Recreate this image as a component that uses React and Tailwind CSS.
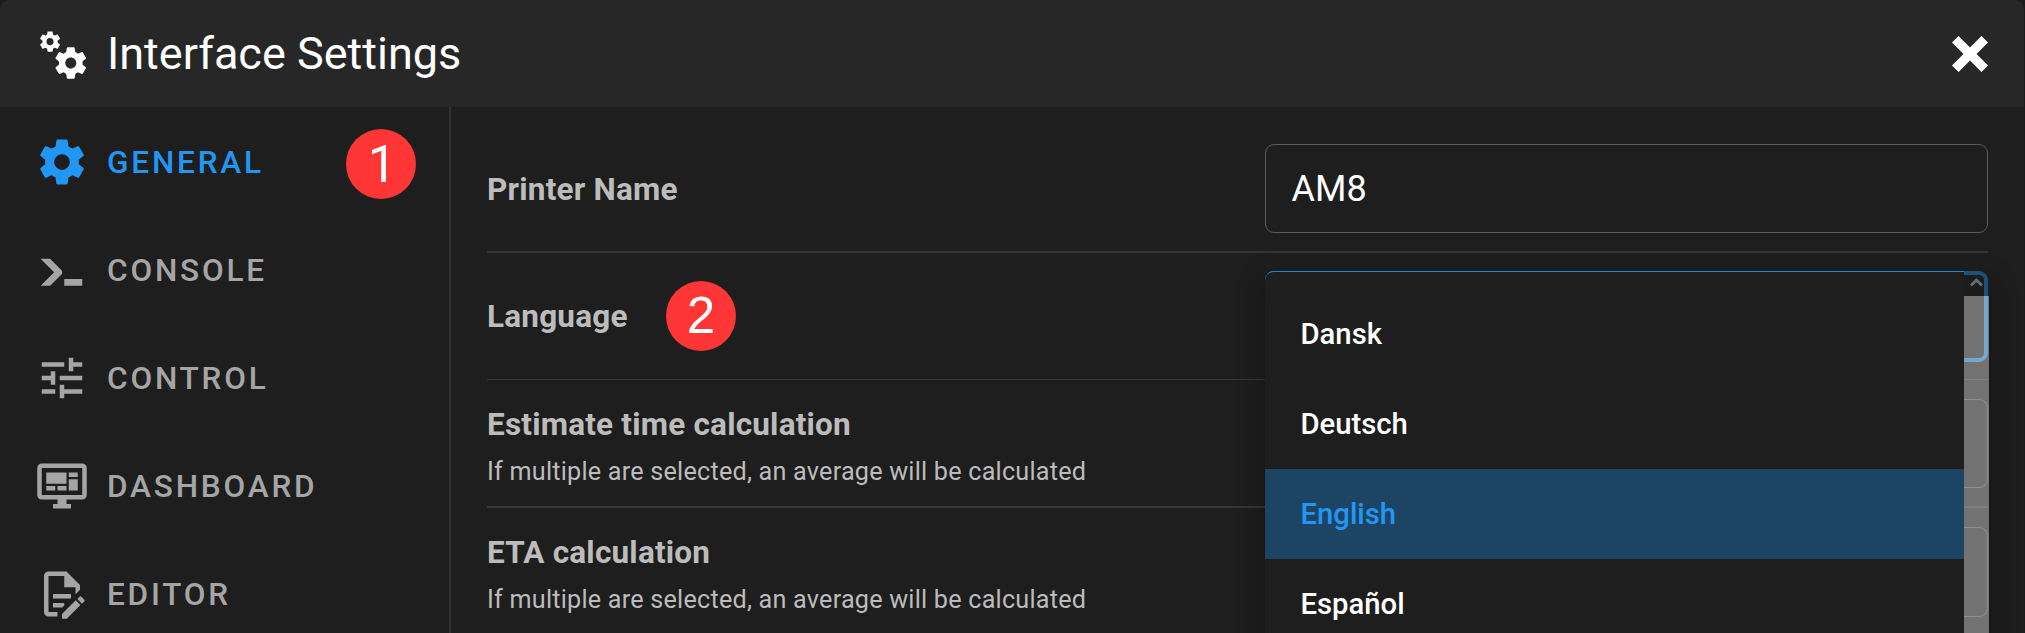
const icons = {
  cogs: "M15.9,18.45C17.25,18.45 18.35,17.35 18.35,16C18.35,14.65 17.25,13.55 15.9,13.55C14.54,13.55 13.45,14.65 13.45,16C13.45,17.35 14.54,18.45 15.9,18.45M21.1,16.68L22.58,17.84C22.71,17.95 22.75,18.13 22.66,18.29L21.26,20.71C21.17,20.86 21,20.92 20.83,20.86L19.09,20.16C18.73,20.44 18.33,20.67 17.91,20.85L17.64,22.7C17.62,22.87 17.47,23 17.3,23H14.5C14.32,23 14.18,22.87 14.15,22.7L13.89,20.85C13.46,20.67 13.07,20.44 12.71,20.16L10.96,20.86C10.81,20.92 10.62,20.86 10.54,20.71L9.14,18.29C9.05,18.13 9.09,17.95 9.22,17.84L10.7,16.68L10.65,16L10.7,15.31L9.22,14.16C9.09,14.05 9.05,13.86 9.14,13.71L10.54,11.29C10.62,11.13 10.81,11.07 10.96,11.13L12.71,11.84C13.07,11.56 13.46,11.32 13.89,11.15L14.15,9.29C14.18,9.13 14.32,9 14.5,9H17.3C17.47,9 17.62,9.13 17.64,9.29L17.91,11.15C18.33,11.32 18.73,11.56 19.09,11.84L20.83,11.13C21,11.07 21.17,11.13 21.26,11.29L22.66,13.71C22.75,13.86 22.71,14.05 22.58,14.16L21.1,15.31L21.15,16L21.1,16.68M6.69,8.07C7.56,8.07 8.26,7.37 8.26,6.5C8.26,5.63 7.56,4.92 6.69,4.92A1.58,1.58 0 0,0 5.11,6.5C5.11,7.37 5.82,8.07 6.69,8.07M10.03,6.94L11,7.68C11.07,7.75 11.09,7.87 11.03,7.97L10.13,9.53C10.08,9.63 9.96,9.67 9.86,9.63L8.74,9.18L8,9.62L7.81,10.81C7.79,10.92 7.7,11 7.59,11H5.79C5.67,11 5.58,10.92 5.56,10.81L5.4,9.62L4.64,9.18L3.52,9.63C3.41,9.67 3.3,9.63 3.24,9.53L2.34,7.97C2.28,7.87 2.31,7.75 2.39,7.68L3.34,6.94L3.31,6.5L3.34,6.06L2.39,5.32C2.31,5.25 2.28,5.13 2.34,5.03L3.24,3.47C3.3,3.37 3.41,3.33 3.52,3.37L4.63,3.82L5.4,3.38L5.56,2.19C5.58,2.08 5.67,2 5.79,2H7.59C7.7,2 7.79,2.08 7.81,2.19L8,3.38L8.74,3.82L9.86,3.37C9.96,3.33 10.08,3.37 10.13,3.47L11.03,5.03C11.09,5.13 11.07,5.25 11,5.32L10.03,6.06L10.06,6.5L10.03,6.94Z",
  cog: "M12,15.5A3.5,3.5 0 0,1 8.5,12A3.5,3.5 0 0,1 12,8.5A3.5,3.5 0 0,1 15.5,12A3.5,3.5 0 0,1 12,15.5M19.43,12.97C19.47,12.65 19.5,12.33 19.5,12C19.5,11.67 19.47,11.34 19.43,11L21.54,9.37C21.73,9.22 21.78,8.95 21.66,8.73L19.66,5.27C19.54,5.05 19.27,4.96 19.05,5.05L16.56,6.05C16.04,5.66 15.5,5.32 14.87,5.07L14.5,2.42C14.46,2.18 14.25,2 14,2H10C9.75,2 9.54,2.18 9.5,2.42L9.13,5.07C8.5,5.32 7.96,5.66 7.44,6.05L4.95,5.05C4.73,4.96 4.46,5.05 4.34,5.27L2.34,8.73C2.21,8.95 2.27,9.22 2.46,9.37L4.57,11C4.53,11.34 4.5,11.67 4.5,12C4.5,12.33 4.53,12.65 4.57,12.97L2.46,14.63C2.27,14.78 2.21,15.05 2.34,15.27L4.34,18.73C4.46,18.95 4.73,19.03 4.95,18.95L7.44,17.94C7.96,18.34 8.5,18.68 9.13,18.93L9.5,21.58C9.54,21.82 9.75,22 10,22H14C14.25,22 14.46,21.82 14.5,21.58L14.87,18.93C15.5,18.67 16.04,18.34 16.56,17.94L19.05,18.95C19.27,19.03 19.54,18.95 19.66,18.73L21.66,15.27C21.78,15.05 21.73,14.78 21.54,14.63L19.43,12.97Z",
  console: "M13,19V16H21V19H13M8.5,13L2.47,7H6.71L11.67,11.95C12.25,12.54 12.25,13.5 11.67,14.07L6.74,19H2.5L8.5,13Z",
  tune: "M3,17V19H9V17H3M3,5V7H13V5H3M13,21V19H21V17H13V15H11V21H13M7,9V11H3V13H7V15H9V9H7M21,13V11H11V13H21M15,9H17V7H21V5H17V3H15V9Z",
  dashboard: "M21,16V4H3V16H21M21,2A2,2 0 0,1 23,4V16A2,2 0 0,1 21,18H14V20H16V22H8V20H10V18H3C1.89,18 1,17.1 1,16V4C1,2.89 1.89,2 3,2H21M5,6H14V11H5V6M15,6H19V8H15V6M19,9V14H15V9H19M5,12H9V14H5V12M10,12H14V14H10V12Z",
  editor: "M8,12H16V14H8V12M10,20H6V4H13V9H18V12.1L20,10.1V8L14,2H6A2,2 0 0,0 4,4V20A2,2 0 0,0 6,22H10V20M8,18H12.1L13,17.1V16H8V18M20.2,13C20.3,13 20.5,13.1 20.6,13.2L21.9,14.5C22.1,14.7 22.1,15.1 21.9,15.3L20.9,16.3L18.8,14.2L19.8,13.2C19.9,13.1 20,13 20.2,13M20.2,16.9L14.1,23H12V20.9L18.1,14.8L20.2,16.9Z",
  close: "M20 6.91L17.09 4L12 9.09L6.91 4L4 6.91L9.09 12L4 17.09L6.91 20L12 14.91L17.09 20L20 17.09L14.91 12L20 6.91Z",
};

function Icon({ name }) {
  return (
    <svg viewBox="0 0 24 24" className="size-[54px] shrink-0 fill-current" aria-hidden="true">
      <path d={icons[name]} />
    </svg>
  );
}

function Step({ n, className }) {
  return (
    <span className={`absolute flex size-[70px] items-center justify-center rounded-full bg-[#ff3636] text-[51px] leading-none text-white ${className}`}>
      {n}
    </span>
  );
}

const nav = [
  { icon: "cog", label: "General", active: true },
  { icon: "console", label: "Console" },
  { icon: "tune", label: "Control" },
  { icon: "dashboard", label: "Dashboard" },
  { icon: "editor", label: "Editor" },
];

const languages = ["Dansk", "Deutsch", "English", "Español"];

function Row({ title, hint, children, className = "" }) {
  return (
    <div className={`flex shrink-0 items-center justify-between ${className}`}>
      <div className={`text-[#bcbcbc] ${hint ? "pt-[6px]" : ""}`}>
        <div className="relative w-fit text-[31.5px] leading-[47px] font-bold tracking-[0.2px] whitespace-nowrap">
          {title}
        </div>
        {hint && <div className="mt-1 text-[25.2px] leading-[40px] tracking-[0.22px] whitespace-nowrap">{hint}</div>}
      </div>
      {children}
    </div>
  );
}

export default function App() {
  return (
    <div className="h-[633px] w-[2025px] overflow-hidden bg-[#1b1b1b] pr-px font-[Roboto,sans-serif]">
      <div className="flex h-full flex-col overflow-hidden rounded-t-[9px] bg-[#1e1e1e]">
        <header className="flex h-[107px] shrink-0 items-center justify-between bg-[#272727] pr-[27px] pl-[35px] text-white">
          <div className="flex items-center gap-[18px]">
            <Icon name="cogs" />
            <h1 className="text-[45px] leading-[54px]">Interface Settings</h1>
          </div>
          <button aria-label="Close"><Icon name="close" /></button>
        </header>

        <div className="flex min-h-0 flex-1">
          <nav className="flex w-[451px] shrink-0 flex-col border-r-2 border-[#333333]">
            {nav.map((item) => (
              <div
                key={item.label}
                className={`relative flex h-[108px] shrink-0 items-center gap-[18px] pt-px pl-[35px] text-[31.5px] font-medium tracking-[0.0893em] uppercase ${item.active ? "text-[#2196f3]" : "text-[#a5a5a5]"}`}
              >
                <Icon name={item.icon} />
                <span className="pt-[3px]">{item.label}</span>
                {item.active && <Step n="1" className="top-[22px] left-[346px] pl-[2px] font-normal tracking-normal" />}
              </div>
            ))}
          </nav>

          <main className="relative flex flex-1 flex-col pr-[36px] pl-[36px]">
            <Row title="Printer Name" className="h-[146px] border-b-2 border-[#363636] pt-[20px]">
              <div className="mb-px flex h-[89px] w-[723px] items-center rounded-[9px] border border-[#5a5a5a] pl-[25.5px] text-[36px] text-white">
                AM8
              </div>
            </Row>
            <Row
              title={<>Language<Step n="2" className="top-[-12px] left-[179px] font-['Liberation_Sans',sans-serif] font-normal tracking-normal" /></>}
              className="h-[127px] border-b border-[#363636]"
            >
              <div className="h-[91px] w-[723px] rounded-[9px] border-4 border-[#2088db]" />
            </Row>
            <Row title="Estimate time calculation" hint="If multiple are selected, an average will be calculated" className="h-[128px] border-b-2 border-[#363636]">
              <div className="mt-px h-[89px] w-[723px] rounded-[9px] border border-[#5a5a5a]" />
            </Row>
            <Row title="ETA calculation" hint="If multiple are selected, an average will be calculated" className="h-[127px]">
              <div className="h-[90px] w-[723px] rounded-[9px] border border-[#5a5a5a]" />
            </Row>

            <div className="absolute top-[164px] left-[814px] flex h-[700px] w-[724px] rounded-[9px] shadow-[0_11px_11px_-7px_rgba(0,0,0,0.2),0_18px_22px_2px_rgba(0,0,0,0.14),0_7px_31px_4px_rgba(0,0,0,0.12)]">
              <ul className="flex w-[699px] flex-col rounded-tl-[9px] border-t border-[#2088db] bg-[#1e1e1e] pt-[17px]">
                {languages.map((l) => (
                  <li
                    key={l}
                    className={`flex h-[90px] shrink-0 items-center pt-[2px] pl-[35.5px] text-[29.25px] font-medium ${l === "English" ? "bg-[#1e4463] text-[#2196f3]" : "text-white"}`}
                  >
                    {l}
                  </li>
                ))}
              </ul>
              <div className="flex w-[25px] flex-col">
                <div className="flex h-[25px] items-center justify-center rounded-tr-[9px] bg-[#1a1a1a]/50 pb-[3px] text-[#6a6a6a]">
                  <svg viewBox="0 0 13 10" className="h-[10px] w-[13px]" fill="none" stroke="currentColor" strokeWidth="3">
                    <path d="M1 8.5L6.5 3L12 8.5" />
                  </svg>
                </div>
                <div className="flex-1 bg-[#c8c8c8]/50" />
              </div>
            </div>
          </main>
        </div>
      </div>
    </div>
  );
}
